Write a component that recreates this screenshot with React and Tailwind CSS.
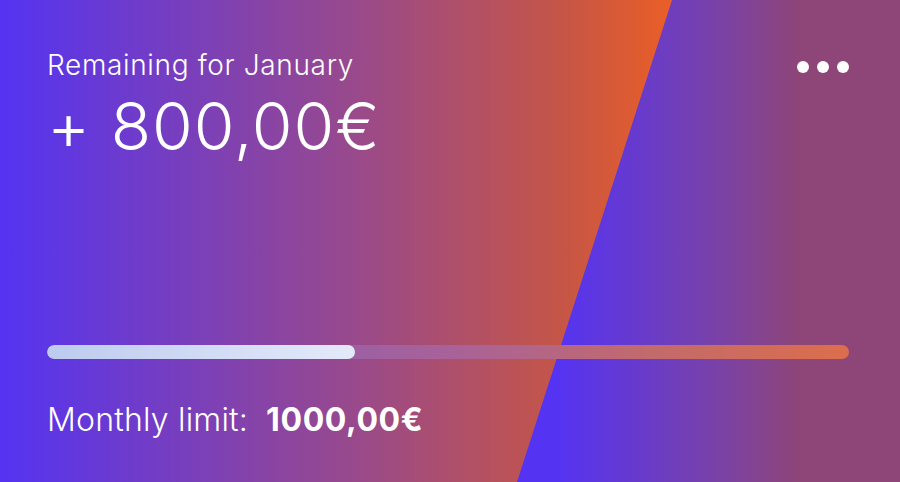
export default function App() {
  const spent = 38.4;

  return (
    <div className="relative h-[482px] w-[900px] overflow-hidden bg-[linear-gradient(90deg,#5433f2_0%,#9a4a8a_40%,#c45548_62%,#e85e28_74%)] font-['Inter',sans-serif] text-white">
      {/* diagonal right panel */}
      <div className="absolute inset-0 bg-[linear-gradient(90deg,#5533f2_0%,#5533f2_62%,#7a42a6_80%,#8e4577_89%,#8e4577_100%)] [clip-path:polygon(672px_0,900px_0,900px_482px,517px_482px)]" />

      <div className="relative flex h-full flex-col pt-[48px] pr-[51px] pb-[44px] pl-[47px]">
        <div className="flex items-start justify-between">
          <div>
            <p className="text-[28px] leading-[34px] font-light tracking-[0.65px]">Remaining for January</p>
            <p className="mt-[8px] text-[66px] leading-[72px] font-light tracking-[1px]">+ 800,00€</p>
          </div>
          <button className="mt-[13px] flex gap-2">
            <span className="h-3 w-3 rounded-full bg-white" />
            <span className="h-3 w-3 rounded-full bg-white" />
            <span className="h-3 w-3 rounded-full bg-white" />
          </button>
        </div>

        <div className="mt-auto">
          <div className="h-[14px] w-full overflow-hidden rounded-full bg-[linear-gradient(90deg,#8c5aae_0%,#9f60a0_40%,#a8629a_50%,#c26a6c_75%,#dc6e4c_100%)]">
            <div
              className="h-full rounded-full bg-[linear-gradient(90deg,#bccbee,#e4eafa)]"
              style={{ width: `${spent}%` }}
            />
          </div>
          <div className="mt-[43px] flex items-baseline gap-[18px] text-[32px] leading-[36px]">
            <span className="font-light tracking-[0.2px]">Monthly limit:</span>
            <span className="font-bold tracking-[0.6px]">1000,00€</span>
          </div>
        </div>
      </div>
    </div>
  );
}
